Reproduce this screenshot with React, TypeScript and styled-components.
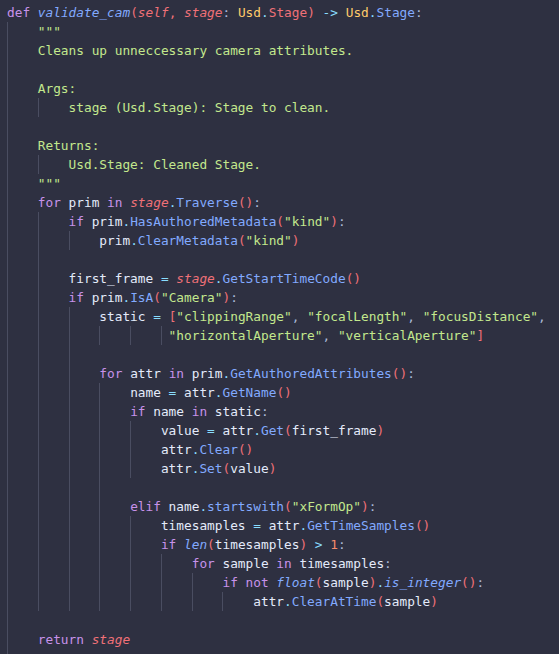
import React from "react";
import styled, { createGlobalStyle } from "styled-components";

const GlobalStyle = createGlobalStyle`
  html, body {
    margin: 0;
    padding: 0;
    background: #2e3041;
  }
  body {
    width: 559px;
    height: 654px;
    overflow: hidden;
  }
`;

type Kind =
  | "kw"
  | "fn"
  | "call"
  | "builtin"
  | "paren"
  | "param"
  | "pstage"
  | "punct"
  | "cls"
  | "dot"
  | "op"
  | "var"
  | "str"
  | "num"
  | "ws";

const colors: Record<Kind, string> = {
  kw: "#c792ea",
  fn: "#82aaff",
  call: "#82aaff",
  builtin: "#82aaff",
  paren: "#f07178",
  param: "#f07178",
  pstage: "#f07178",
  punct: "#a9b8d8",
  cls: "#ffcb6b",
  dot: "#89ddff",
  op: "#89ddff",
  var: "#e4ebfb",
  str: "#c3e88d",
  num: "#f78c6c",
  ws: "#e4ebfb",
};

const italicKinds: Kind[] = ["fn", "builtin", "param"];

type Tok = [Kind, string];
type Line = { indent: number; guides: number; tokens: Tok[] };

const S: Tok = ["ws", " "];

const L = (indent: number, guides: number, ...tokens: Tok[]): Line => ({
  indent,
  guides,
  tokens,
});
const blank = (guides: number): Line => ({ indent: guides * 4, guides, tokens: [] });

const lines: Line[] = [
  L(0, 0,
    ["kw", "def"], S, ["fn", "validate_cam"], ["paren", "("], ["param", "self"], ["paren", ","], S,
    ["param", "stage"], ["punct", ":"], S, ["cls", "Usd"], ["dot", "."], ["pstage", "Stage"], ["paren", ")"], S,
    ["op", "->"], S, ["cls", "Usd"], ["dot", "."], ["call", "Stage"], ["punct", ":"]),
  L(4, 1, ["str", '"""']),
  L(4, 1, ["str", "Cleans up unneccessary camera attributes."]),
  blank(1),
  L(4, 1, ["str", "Args:"]),
  L(8, 2, ["str", "stage (Usd.Stage): Stage to clean."]),
  blank(1),
  L(4, 1, ["str", "Returns:"]),
  L(8, 2, ["str", "Usd.Stage: Cleaned Stage."]),
  L(4, 1, ["str", '"""']),
  L(4, 1, ["kw", "for"], S, ["var", "prim"], S, ["kw", "in"], S, ["param", "stage"], ["dot", "."],
    ["call", "Traverse"], ["paren", "()"], ["punct", ":"]),
  L(8, 2, ["kw", "if"], S, ["var", "prim"], ["dot", "."], ["call", "HasAuthoredMetadata"], ["paren", "("],
    ["str", '"kind"'], ["paren", ")"], ["punct", ":"]),
  L(12, 3, ["var", "prim"], ["dot", "."], ["call", "ClearMetadata"], ["paren", "("], ["str", '"kind"'], ["paren", ")"]),
  blank(2),
  L(8, 2, ["var", "first_frame"], S, ["op", "="], S, ["param", "stage"], ["dot", "."], ["call", "GetStartTimeCode"],
    ["paren", "()"]),
  L(8, 2, ["kw", "if"], S, ["var", "prim"], ["dot", "."], ["call", "IsA"], ["paren", "("], ["str", '"Camera"'],
    ["paren", ")"], ["punct", ":"]),
  L(12, 3, ["var", "static"], S, ["op", "="], S, ["paren", "["], ["str", '"clippingRange"'], ["punct", ","], S,
    ["str", '"focalLength"'], ["punct", ","], S, ["str", '"focusDistance"'], ["punct", ","]),
  L(21, 6, ["str", '"horizontalAperture"'], ["punct", ","], S, ["str", '"verticalAperture"'], ["paren", "]"]),
  blank(3),
  L(12, 3, ["kw", "for"], S, ["var", "attr"], S, ["kw", "in"], S, ["var", "prim"], ["dot", "."],
    ["call", "GetAuthoredAttributes"], ["paren", "()"], ["punct", ":"]),
  L(16, 4, ["var", "name"], S, ["op", "="], S, ["var", "attr"], ["dot", "."], ["call", "GetName"], ["paren", "()"]),
  L(16, 4, ["kw", "if"], S, ["var", "name"], S, ["kw", "in"], S, ["var", "static"], ["punct", ":"]),
  L(20, 5, ["var", "value"], S, ["op", "="], S, ["var", "attr"], ["dot", "."], ["call", "Get"], ["paren", "("],
    ["var", "first_frame"], ["paren", ")"]),
  L(20, 5, ["var", "attr"], ["dot", "."], ["call", "Clear"], ["paren", "()"]),
  L(20, 5, ["var", "attr"], ["dot", "."], ["call", "Set"], ["paren", "("], ["var", "value"], ["paren", ")"]),
  blank(4),
  L(16, 4, ["kw", "elif"], S, ["var", "name"], ["dot", "."], ["call", "startswith"], ["paren", "("],
    ["str", '"xFormOp"'], ["paren", ")"], ["punct", ":"]),
  L(20, 5, ["var", "timesamples"], S, ["op", "="], S, ["var", "attr"], ["dot", "."], ["call", "GetTimeSamples"],
    ["paren", "()"]),
  L(20, 5, ["kw", "if"], S, ["builtin", "len"], ["paren", "("], ["var", "timesamples"], ["paren", ")"], S,
    ["op", ">"], S, ["num", "1"], ["punct", ":"]),
  L(24, 6, ["kw", "for"], S, ["var", "sample"], S, ["kw", "in"], S, ["var", "timesamples"], ["punct", ":"]),
  L(28, 7, ["kw", "if"], S, ["kw", "not"], S, ["builtin", "float"], ["paren", "("], ["var", "sample"],
    ["paren", ")"], ["dot", "."], ["builtin", "is_integer"], ["paren", "()"], ["punct", ":"]),
  L(32, 8, ["var", "attr"], ["dot", "."], ["call", "ClearAtTime"], ["paren", "("], ["var", "sample"],
    ["paren", ")"]),
  blank(1),
  L(4, 1, ["kw", "return"], S, ["param", "stage"]),
  blank(1),
];

const Editor = styled.div`
  box-sizing: border-box;
  width: 559px;
  height: 654px;
  padding: 3px 0 0 7px;
  background: #2e3041;
  font-family: "DejaVu Sans Mono", "Liberation Mono", monospace;
  font-size: 12.79px;
  color: #e4ebfb;
  overflow: hidden;
`;

const Row = styled.div`
  height: 19px;
  line-height: 19px;
  white-space: pre;
`;

const Guide = styled.span`
  display: inline-block;
  height: 19px;
  vertical-align: top;
  box-shadow: inset 1px 0 0 #4a4d61;
`;

const Token = styled.span<{ $kind: Kind }>`
  color: ${(p) => colors[p.$kind]};
  font-style: ${(p) => (italicKinds.includes(p.$kind) ? "italic" : "normal")};
`;

function CodeLine({ line }: { line: Line }) {
  const units: number[] = [];
  let used = 0;
  for (let i = 0; i < line.guides; i++) {
    const w = Math.min(4, line.indent - i * 4);
    units.push(w);
    used += w;
  }
  const rest = " ".repeat(Math.max(0, line.indent - used));
  return (
    <Row>
      {units.map((w, i) => (
        <Guide key={i}>{" ".repeat(w)}</Guide>
      ))}
      {rest}
      {line.tokens.map(([k, text], i) => (
        <Token key={i} $kind={k}>
          {text}
        </Token>
      ))}
    </Row>
  );
}

export default function App() {
  return (
    <>
      <GlobalStyle />
      <Editor>
        {lines.map((line, i) => (
          <CodeLine key={i} line={line} />
        ))}
      </Editor>
    </>
  );
}
